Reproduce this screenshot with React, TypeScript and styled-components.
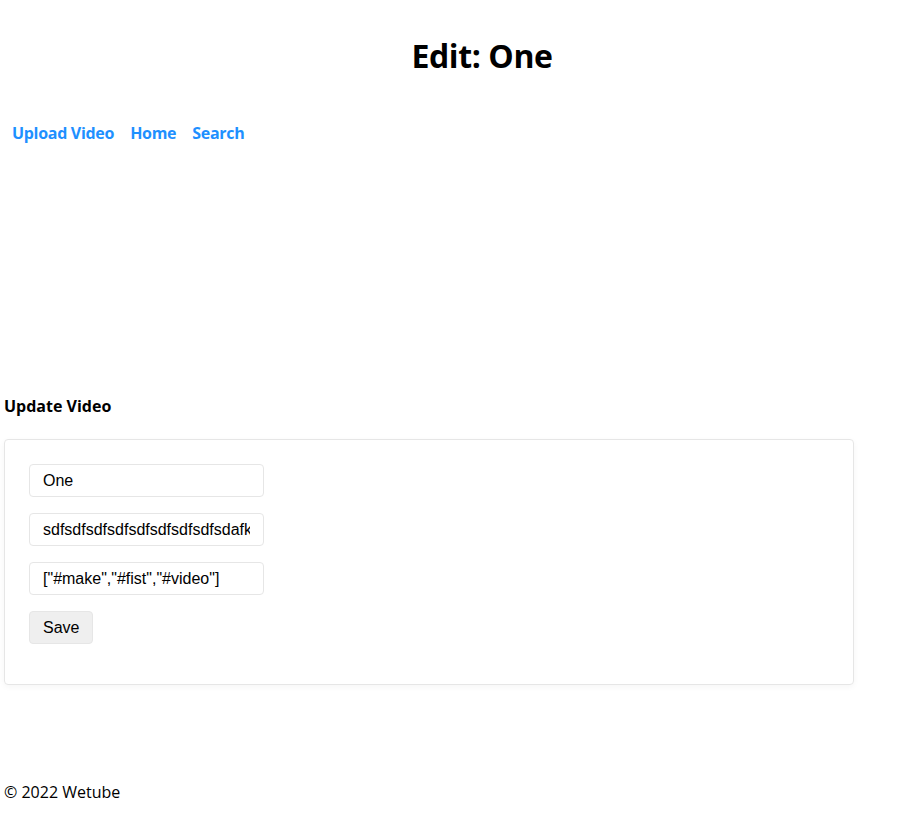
import React from "react";
import styled, { createGlobalStyle } from "styled-components";

const Global = createGlobalStyle`
  html, body { margin: 0; padding: 0; background: #fff; }
  body { font-family: "Open Sans", "Noto Sans", sans-serif; color: #000; }
`;

const Page = styled.div`
  display: flex;
  flex-direction: column;
  padding: 0 4px;
  width: 850px;
`;

const Header = styled.header`
  display: flex;
  flex-direction: column;
`;

const Title = styled.h1`
  margin: 34px 0 0;
  font-size: 32px;
  font-weight: 700;
  text-align: center;
  padding-left: 106px;
  line-height: 44px;
  letter-spacing: -0.4px;
`;

const Nav = styled.nav`
  display: flex;
  gap: 16px;
  margin-top: 43px;
  padding-left: 8px;
`;

const NavLink = styled.a`
  color: #1e90ff;
  font-weight: 700;
  font-size: 16px;
  text-decoration: none;
  line-height: 24px;
  letter-spacing: -0.3px;
`;

const Main = styled.main`
  display: flex;
  flex-direction: column;
  margin-top: 249px;
`;

const Subtitle = styled.h4`
  margin: 0;
  font-size: 16px;
  font-weight: 700;
  line-height: 24px;
`;

const Card = styled.form`
  margin-top: 21px;
  border: 1px solid #e6e6e6;
  border-radius: 4px;
  box-shadow: 0 2px 6px rgba(0, 0, 0, 0.04);
  padding: 24px 24px 40px;
  display: flex;
  flex-direction: column;
  gap: 16px;
  align-items: flex-start;
`;

const Input = styled.input`
  box-sizing: border-box;
  width: 235px;
  height: 33px;
  border: 1px solid #e6e6e6;
  border-radius: 4px;
  padding: 0 13px;
  font-family: "Liberation Sans", Arial, sans-serif;
  font-size: 16px;
  color: #000;
  outline: none;
`;

const Button = styled.button`
  box-sizing: border-box;
  height: 33px;
  padding: 0 13px;
  border: 1px solid #e6e6e6;
  border-radius: 4px;
  background: #efefef;
  font-family: "Liberation Sans", Arial, sans-serif;
  font-size: 16px;
  color: #000;
`;

const Footer = styled.footer`
  margin-top: 95px;
  font-size: 16px;
  line-height: 24px;
`;

export default function App() {
  return (
    <>
      <Global />
      <Page>
        <Header>
          <Title>Edit: One</Title>
          <Nav>
            <NavLink href="#">Upload Video</NavLink>
            <NavLink href="#">Home</NavLink>
            <NavLink href="#">Search</NavLink>
          </Nav>
        </Header>
        <Main>
          <Subtitle>Update Video</Subtitle>
          <Card onSubmit={(e) => e.preventDefault()}>
            <Input defaultValue="One" />
            <Input defaultValue="sdfsdfsdfsdfsdfsdfsdfsdfsdafkjsdlfkj" />
            <Input defaultValue={'["#make","#fist","#video"]'} />
            <Button type="submit">Save</Button>
          </Card>
        </Main>
        <Footer>© 2022 Wetube</Footer>
      </Page>
    </>
  );
}
